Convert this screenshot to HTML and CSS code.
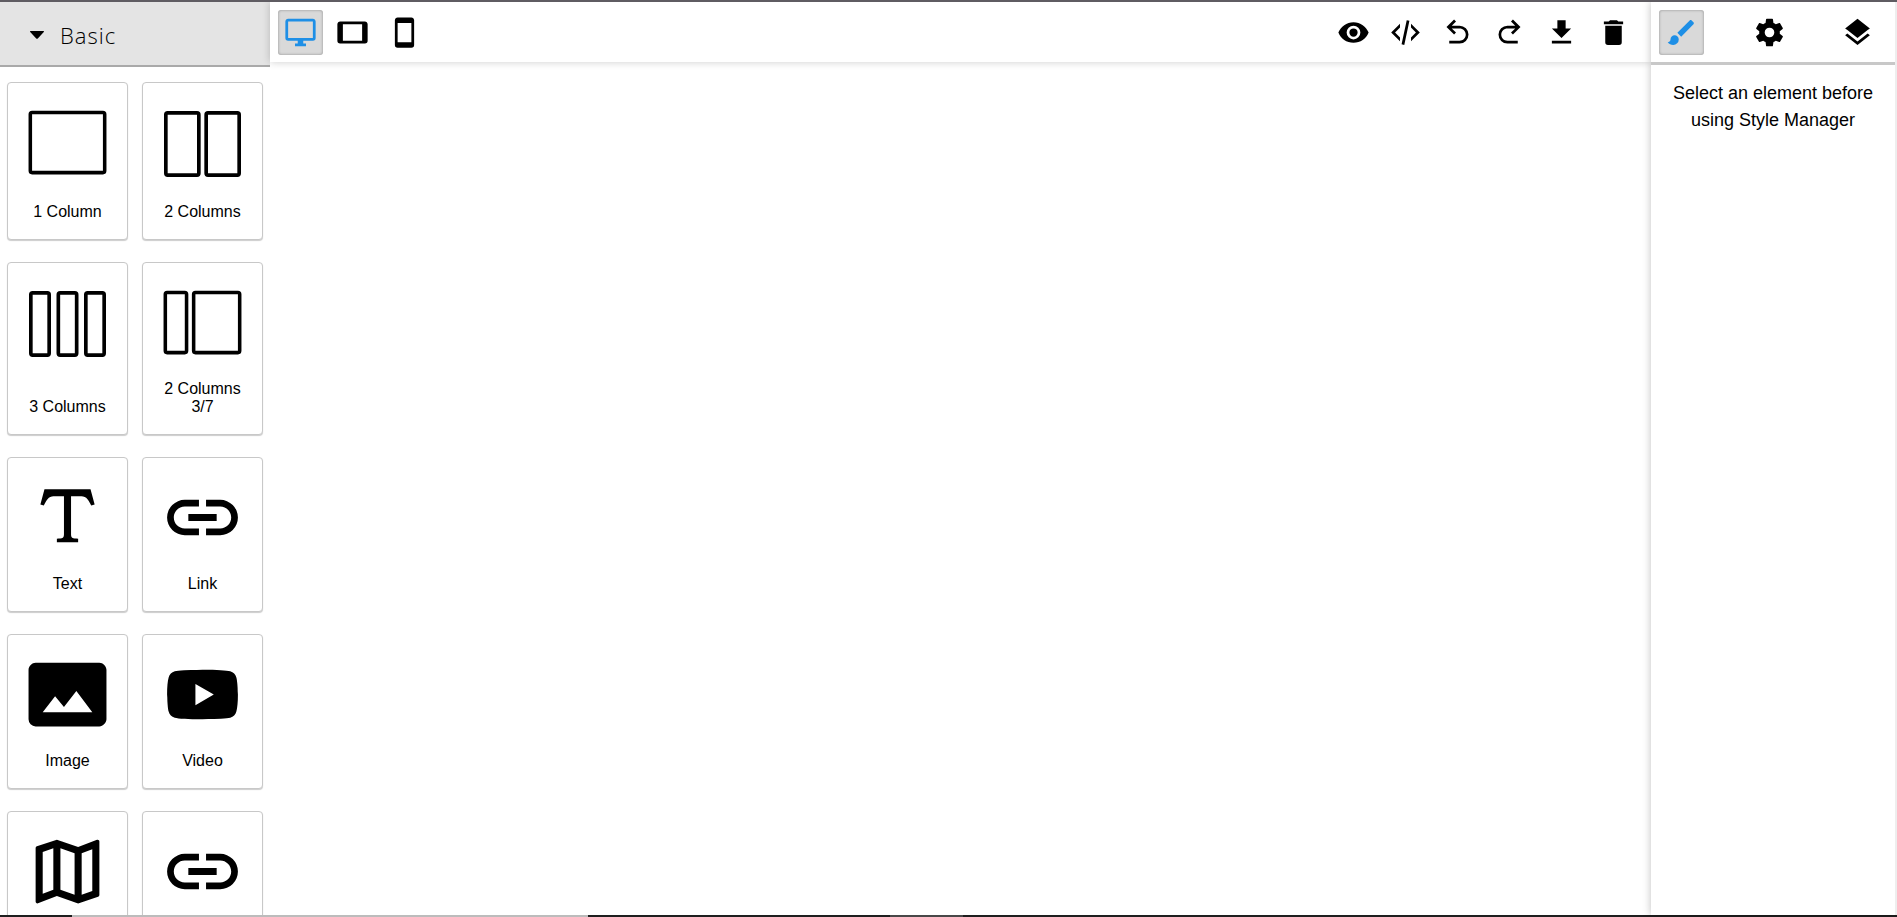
FILE: index.html
```html
<!DOCTYPE html>
<html lang="en">
<head>
<meta charset="utf-8">
<title>Page builder</title>
<link rel="stylesheet" href="styles.css">
</head>
<body>
<div class="app">
  <div class="editor">
    <aside class="blocks">
      <button class="category" type="button" aria-expanded="true">
        <svg class="caret" viewBox="0 0 14 8" aria-hidden="true"><path d="M.6 0h12.8c.6 0 .8.6.4 1L8 7.3c-.6.7-1.400.7-2 0L.2 1C-.2.6 0 0 .6 0Z"/></svg>
        <span>Basic</span>
      </button>
      <div class="block-grid">
        <button class="block" type="button">
          <svg viewBox="0 0 24 24" aria-hidden="true"><path d="M2 20h20V4H2v16Zm-1 0V4a1 1 0 0 1 1-1h20a1 1 0 0 1 1 1v16a1 1 0 0 1-1 1H2a1 1 0 0 1-1-1Z"/></svg>
          <span>1 Column</span>
        </button>
        <button class="block" type="button">
          <svg class="tall" viewBox="0 0 23 24" aria-hidden="true"><path d="M2 20h8V4H2v16Zm-1 0V4a1 1 0 0 1 1-1h8a1 1 0 0 1 1 1v16a1 1 0 0 1-1 1H2a1 1 0 0 1-1-1ZM13 20h8V4h-8v16Zm-1 0V4a1 1 0 0 1 1-1h8a1 1 0 0 1 1 1v16a1 1 0 0 1-1 1h-8a1 1 0 0 1-1-1Z"/></svg>
          <span>2 Columns</span>
        </button>
        <button class="block" type="button">
          <svg class="tall" viewBox="0 0 23 24" aria-hidden="true"><path d="M2 20h4V4H2v16Zm-1 0V4a1 1 0 0 1 1-1h4a1 1 0 0 1 1 1v16a1 1 0 0 1-1 1H2a1 1 0 0 1-1-1ZM17 20h4V4h-4v16Zm-1 0V4a1 1 0 0 1 1-1h4a1 1 0 0 1 1 1v16a1 1 0 0 1-1 1h-4a1 1 0 0 1-1-1ZM9.500 20h4V4h-4v16Zm-1 0V4a1 1 0 0 1 1-1h4a1 1 0 0 1 1 1v16a1 1 0 0 1-1 1h-4a1 1 0 0 1-1-1Z"/></svg>
          <span>3 Columns</span>
        </button>
        <button class="block" type="button">
          <svg viewBox="0 0 24 24" aria-hidden="true"><path d="M2 20h5V4H2v16Zm-1 0V4a1 1 0 0 1 1-1h5a1 1 0 0 1 1 1v16a1 1 0 0 1-1 1H2a1 1 0 0 1-1-1ZM10 20h12V4H10v16Zm-1 0V4a1 1 0 0 1 1-1h12a1 1 0 0 1 1 1v16a1 1 0 0 1-1 1H10a1 1 0 0 1-1-1Z"/></svg>
          <span>2 Columns 3/7</span>
        </button>
        <button class="block" type="button">
          <svg viewBox="0 0 24 24" aria-hidden="true"><path d="M18.500,4L19.660,8.350L18.700,8.610C18.250,7.740 17.790,6.870 17.260,6.430C16.730,6 16.110,6 15.500,6H13V16.500C13,17 13,17.500 13.330,17.750C13.670,18 14.330,18 15,18V19H9V18C9.670,18 10.330,18 10.670,17.750C11,17.500 11,17 11,16.500V6H8.500C7.890,6 7.270,6 6.740,6.430C6.210,6.870 5.750,7.740 5.300,8.610L4.340,8.350L5.500,4H18.500Z"/></svg>
          <span>Text</span>
        </button>
        <button class="block" type="button">
          <svg viewBox="0 0 24 24" aria-hidden="true"><path d="M3.900,12C3.900,10.290 5.290,8.900 7,8.900H11V7H7A5,5 0 0,0 2,12A5,5 0 0,0 7,17H11V15.100H7C5.290,15.100 3.900,13.710 3.900,12M8,13H16V11H8V13M17,7H13V8.900H17C18.710,8.900 20.100,10.290 20.100,12C20.100,13.710 18.710,15.100 17,15.100H13V17H17A5,5 0 0,0 22,12A5,5 0 0,0 17,7Z"/></svg>
          <span>Link</span>
        </button>
        <button class="block" type="button">
          <svg viewBox="0 0 24 24" aria-hidden="true"><path d="M21,3H3C2,3 1,4 1,5V19A2,2 0 0,0 3,21H21C22,21 23,20 23,19V5C23,4 22,3 21,3M5,17L8.500,12.500L11,15.500L14.500,11L19,17H5Z"/></svg>
          <span>Image</span>
        </button>
        <button class="block" type="button">
          <svg viewBox="0 0 24 24" aria-hidden="true"><path d="M10,15L15.190,12L10,9V15M21.560,7.170C21.690,7.640 21.780,8.270 21.840,9.070C21.910,9.870 21.940,10.560 21.940,11.160L22,12C22,14.190 21.840,15.800 21.560,16.830C21.310,17.730 20.730,18.310 19.830,18.560C19.360,18.690 18.500,18.780 17.180,18.840C15.880,18.910 14.690,18.940 13.590,18.940L12,19C7.810,19 5.200,18.840 4.170,18.560C3.270,18.310 2.690,17.730 2.440,16.830C2.310,16.360 2.220,15.730 2.160,14.930C2.090,14.130 2.060,13.440 2.060,12.840L2,12C2,9.810 2.160,8.200 2.440,7.170C2.690,6.270 3.270,5.690 4.170,5.440C4.640,5.310 5.500,5.220 6.820,5.160C8.120,5.090 9.310,5.060 10.410,5.060L12,5C16.190,5 18.800,5.160 19.830,5.440C20.730,5.690 21.310,6.270 21.560,7.170Z"/></svg>
          <span>Video</span>
        </button>
        <button class="block" type="button" aria-label="Map">
          <svg viewBox="0 0 24 24" aria-hidden="true"><path fill-rule="evenodd" d="M20.500 3l-.16.03L15 5.100 9 3 3.360 4.900c-.21.07-.36.25-.36.480V20.500c0 .280.220.5.5.5l.16-.03L9 18.900l6 2.100 5.640-1.900c.21-.07.36-.25.36-.480V3.500c0-.28-.22-.5-.5-.5ZM10 5.470l4 1.400v11.660l-4-1.400V5.470Zm-5 .99 3-1.010v11.700l-3 1.160V6.460Zm14 11.080-3 1.010V6.860l3-1.160v11.840Z"/></svg>
        </button>
        <button class="block" type="button" aria-label="Link Block">
          <svg viewBox="0 0 24 24" aria-hidden="true"><path d="M3.900,12C3.900,10.290 5.290,8.900 7,8.900H11V7H7A5,5 0 0,0 2,12A5,5 0 0,0 7,17H11V15.100H7C5.290,15.100 3.900,13.710 3.900,12M8,13H16V11H8V13M17,7H13V8.900H17C18.710,8.900 20.100,10.290 20.100,12C20.100,13.710 18.710,15.100 17,15.100H13V17H17A5,5 0 0,0 22,12A5,5 0 0,0 17,7Z"/></svg>
        </button>
      </div>
    </aside>

    <main class="stage">
      <header class="toolbar">
        <div class="tools">
          <button class="tool active" type="button" aria-label="Desktop"><svg viewBox="0 0 24 24"><path d="M21,16H3V4H21M21,2H3C1.890,2 1,2.890 1,4V16A2,2 0 0,0 3,18H10V20H8V22H16V20H14V18H21A2,2 0 0,0 23,16V4C23,2.890 22.100,2 21,2Z"/></svg></button>
          <button class="tool" type="button" aria-label="Tablet"><svg viewBox="0 0 24 24"><path d="M19,18H5V6H19M21,4H3C1.890,4 1,4.890 1,6V18A2,2 0 0,0 3,20H21A2,2 0 0,0 23,18V6C23,4.890 22.100,4 21,4Z"/></svg></button>
          <button class="tool" type="button" aria-label="Mobile"><svg viewBox="0 0 24 24"><path d="M17,19H7V5H17M17,1H7C5.890,1 5,1.890 5,3V21A2,2 0 0,0 7,23H17A2,2 0 0,0 19,21V3C19,1.890 18.100,1 17,1Z"/></svg></button>
        </div>
        <div class="tools">
          <button class="tool" type="button" aria-label="Preview"><svg viewBox="0 0 24 24"><path d="M12,9A3,3 0 0,0 9,12A3,3 0 0,0 12,15A3,3 0 0,0 15,12A3,3 0 0,0 12,9M12,17A5,5 0 0,1 7,12A5,5 0 0,1 12,7A5,5 0 0,1 17,12A5,5 0 0,1 12,17M12,4.500C7,4.500 2.730,7.610 1,12C2.730,16.390 7,19.500 12,19.500C17,19.500 21.270,16.390 23,12C21.270,7.610 17,4.500 12,4.500Z"/></svg></button>
          <button class="tool" type="button" aria-label="View code"><svg viewBox="0 0 24 24"><path d="M12.890,3L14.850,3.400L11.110,21L9.150,20.600L12.890,3M19.590,12L16,8.410V5.580L22.420,12L16,18.410V15.580L19.590,12M1.580,12L8,5.580V8.410L4.410,12L8,15.580V18.410L1.580,12Z"/></svg></button>
          <button class="tool" type="button" aria-label="Undo"><svg viewBox="0 0 24 24"><path d="M20,13.500A6.500,6.500 0 0,1 13.500,20H6V18H13.500C16,18 18,16 18,13.500C18,11 16,9 13.500,9H7.830L10.910,12.090L9.500,13.500L4,8L9.500,2.500L10.920,3.910L7.830,7H13.500A6.500,6.500 0 0,1 20,13.500Z"/></svg></button>
          <button class="tool" type="button" aria-label="Redo"><svg viewBox="0 0 24 24"><path d="M10.500,18H18V20H10.500A6.500,6.500 0 0,1 4,13.500A6.500,6.500 0 0,1 10.500,7H16.170L13.080,3.910L14.500,2.500L20,8L14.500,13.500L13.090,12.090L16.170,9H10.500C8,9 6,11 6,13.500C6,16 8,18 10.500,18Z"/></svg></button>
          <button class="tool" type="button" aria-label="Import"><svg viewBox="0 0 24 24"><path d="M5,20H19V18H5M19,9H15V3H9V9H5L12,16L19,9Z"/></svg></button>
          <button class="tool" type="button" aria-label="Clear canvas"><svg viewBox="0 0 24 24"><path d="M19,4H15.500L14.500,3H9.500L8.500,4H5V6H19M6,19A2,2 0 0,0 8,21H16A2,2 0 0,0 18,19V7H6V19Z"/></svg></button>
        </div>
      </header>
      <div class="canvas"></div>
    </main>

    <aside class="inspector">
      <nav class="tabs">
        <button class="tool active" type="button" aria-label="Style Manager"><svg viewBox="0 0 24 24"><path d="M20.710,4.630L19.370,3.290C19,2.900 18.350,2.900 17.960,3.290L9,12.250L11.750,15L20.710,6.040C21.100,5.650 21.100,5 20.710,4.630M7,14A3,3 0 0,0 4,17C4,18.310 2.840,19 2,19C2.920,20.220 4.500,21 6,21A4,4 0 0,0 10,17A3,3 0 0,0 7,14Z"/></svg></button>
        <button class="tool" type="button" aria-label="Settings"><svg viewBox="0 0 24 24"><path d="M12,15.500A3.500,3.500 0 0,1 8.500,12A3.500,3.500 0 0,1 12,8.500A3.500,3.500 0 0,1 15.500,12A3.500,3.500 0 0,1 12,15.500M19.430,12.970C19.470,12.650 19.500,12.330 19.500,12C19.500,11.670 19.470,11.340 19.430,11L21.540,9.370C21.730,9.220 21.780,8.950 21.660,8.730L19.660,5.270C19.540,5.050 19.270,4.960 19.050,5.050L16.560,6.050C16.040,5.660 15.500,5.320 14.870,5.070L14.500,2.420C14.460,2.180 14.250,2 14,2H10C9.750,2 9.540,2.180 9.500,2.420L9.130,5.070C8.500,5.320 7.960,5.660 7.440,6.050L4.950,5.050C4.730,4.960 4.460,5.050 4.340,5.270L2.340,8.730C2.210,8.950 2.270,9.220 2.460,9.370L4.570,11C4.530,11.340 4.500,11.670 4.500,12C4.500,12.330 4.530,12.650 4.570,12.970L2.460,14.630C2.270,14.780 2.210,15.050 2.340,15.270L4.340,18.730C4.460,18.950 4.730,19.030 4.950,18.950L7.440,17.940C7.960,18.340 8.500,18.680 9.130,18.930L9.500,21.580C9.540,21.820 9.750,22 10,22H14C14.250,22 14.460,21.820 14.500,21.580L14.870,18.930C15.500,18.670 16.040,18.340 16.560,17.940L19.050,18.950C19.270,19.030 19.540,18.950 19.660,18.730L21.660,15.270C21.780,15.050 21.730,14.780 21.540,14.630L19.430,12.970Z"/></svg></button>
        <button class="tool" type="button" aria-label="Layers"><svg viewBox="0 0 24 24"><path d="M12,16L19.360,10.270L21,9L12,2L3,9L4.630,10.270M12,18.540L4.620,12.810L3,14.070L12,21.070L21,14.070L19.370,12.800L12,18.540Z"/></svg></button>
      </nav>
      <p class="hint">Select an element before using Style Manager</p>
    </aside>
  </div>
  <footer class="strip"></footer>
</div>
</body>
</html>
```

FILE: styles.css
```css
* {
  box-sizing: border-box;
}

body {
  margin: 0;
  background: #fff;
  color: #000;
  font-family: "Liberation Sans", Arial, sans-serif;
}

button {
  margin: 0;
  font: inherit;
  color: inherit;
  cursor: pointer;
}

svg {
  display: block;
  fill: currentColor;
}

.app {
  display: flex;
  flex-direction: column;
  height: 100vh;
  overflow: hidden;
  border-top: 2px solid #5f5c62;
}

.editor {
  flex: 1;
  min-height: 0;
  display: grid;
  grid-template-columns: 270px 1fr 246px;
}

.blocks {
  min-height: 0;
  overflow: hidden;
}

.category {
  display: flex;
  align-items: center;
  gap: 16px;
  width: 100%;
  height: 65px;
  padding: 2px 30px 0;
  border: 0;
  border-bottom: 2px solid #a9a9a9;
  background: #e4e4e4;
  font-family: "Open Sans", sans-serif;
  font-size: 22px;
  font-weight: 300;
  letter-spacing: 1px;
}

.caret {
  width: 14px;
  height: 8px;
}

.block-grid {
  display: grid;
  grid-template-columns: 1fr 1fr;
  gap: 22px 14px;
  padding: 15px 7px;
}

.block {
  display: flex;
  flex-direction: column;
  justify-content: space-between;
  gap: 15px;
  padding: 17px 17px 18px;
  border: 1px solid #c8c8c8;
  border-radius: 4px;
  background: #fff;
  box-shadow: 0 1px 1px rgba(0, 0, 0, 0.2);
  font-size: 16px;
  line-height: 18px;
  text-align: center;
}

.block svg {
  width: 100%;
}

.block .tall {
  height: 88px;
}

.block span {
  width: 100%;
}

.stage {
  display: flex;
  flex-direction: column;
  min-width: 0;
}

.toolbar {
  position: relative;
  display: flex;
  justify-content: space-between;
  height: 60px;
  padding: 8px 15px 0 8px;
  background: #fff;
  box-shadow: 0 0 8px rgba(0, 0, 0, 0.2);
}

.tools {
  display: flex;
  gap: 7px;
}

.tool {
  display: grid;
  place-items: center;
  width: 45px;
  height: 45px;
  padding: 0;
  border: 0;
  border-radius: 3px;
  background: none;
}

.tool svg {
  width: 33px;
  height: 33px;
}

.tool.active {
  background: #d9d9d9;
  color: #1e8fe6;
  box-shadow: inset 0 0 3px rgba(0, 0, 0, 0.35);
}

.canvas {
  flex: 1;
}

.inspector {
  position: relative;
  border-right: 2px solid #eee;
  background: #fff;
  box-shadow: 0 0 8px rgba(0, 0, 0, 0.25);
}

.tabs {
  display: flex;
  justify-content: space-between;
  height: 63px;
  padding: 8px 15px 0 8px;
  border-bottom: 3px solid #c8c8c8;
}

.hint {
  margin: 0;
  padding: 15px;
  font-size: 18px;
  line-height: 27px;
  text-align: center;
}

.strip {
  height: 2px;
  background: linear-gradient(90deg,
    #1e1e1e 72px, #bcbcbc 72px, #bcbcbc 588px,
    #1e1e1e 588px, #1e1e1e 890px,
    #484848 890px, #484848 963px, #1e1e1e 963px);
}
```
